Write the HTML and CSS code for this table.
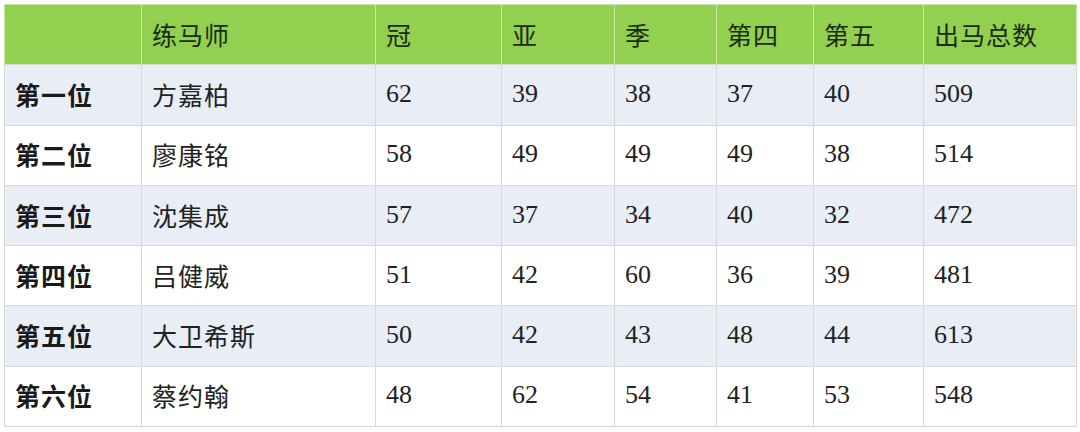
FILE: index.html
```html
<!DOCTYPE html>
<html>
<head>
<meta charset="utf-8">
<link rel="stylesheet" href="styles.css">
</head>
<body>
<table class="stats">
  <colgroup>
    <col class="c1"><col class="c2"><col class="c3"><col class="c4"><col class="c5"><col class="c6"><col class="c7"><col class="c8">
  </colgroup>
  <thead>
    <tr><th></th><th>练马师</th><th>冠</th><th>亚</th><th>季</th><th>第四</th><th>第五</th><th>出马总数</th></tr>
  </thead>
  <tbody>
    <tr class="alt"><td class="rank">第一位</td><td>方嘉柏</td><td>62</td><td>39</td><td>38</td><td>37</td><td>40</td><td>509</td></tr>
    <tr><td class="rank">第二位</td><td>廖康铭</td><td>58</td><td>49</td><td>49</td><td>49</td><td>38</td><td>514</td></tr>
    <tr class="alt"><td class="rank">第三位</td><td>沈集成</td><td>57</td><td>37</td><td>34</td><td>40</td><td>32</td><td>472</td></tr>
    <tr><td class="rank">第四位</td><td>吕健威</td><td>51</td><td>42</td><td>60</td><td>36</td><td>39</td><td>481</td></tr>
    <tr class="alt"><td class="rank">第五位</td><td>大卫希斯</td><td>50</td><td>42</td><td>43</td><td>48</td><td>44</td><td>613</td></tr>
    <tr><td class="rank">第六位</td><td>蔡约翰</td><td>48</td><td>62</td><td>54</td><td>41</td><td>53</td><td>548</td></tr>
  </tbody>
</table>
</body>
</html>
```

FILE: styles.css
```css
html, body {
  margin: 0;
  padding: 0;
  background: #ffffff;
}
body {
  padding: 4px 0 0 4px;
}
.stats {
  border-collapse: collapse;
  table-layout: fixed;
  width: 1072px;
  font-family: "Liberation Serif", "Times New Roman", "DejaVu Serif", "Noto Sans CJK SC", serif;
  font-size: 26px;
  color: #222222;
  border: 1px solid #d4d4d4;
}
.c1 { width: 137px; }
.c2 { width: 234px; }
.c3 { width: 126px; }
.c4 { width: 113px; }
.c5 { width: 102px; }
.c6 { width: 97px; }
.c7 { width: 110px; }
.c8 { width: 153px; }
.stats th,
.stats td {
  height: 57.3px;
  padding: 0 0 2px 10px;
  text-align: left;
  vertical-align: middle;
  border: 1px solid #d8d8d8;
  white-space: nowrap;
}
.stats th,
.stats td:nth-child(-n+2) {
  font-size: 25px;
  letter-spacing: 1px;
}
.stats th {
  background: #92d050;
  font-weight: normal;
  color: #1c2a10;
  border-color: #c8e6a8;
  border-bottom-color: #d8d8d8;
}
.stats tr.alt td {
  background: #e8edf6;
}
.stats td.rank {
  font-weight: 600;
  color: #1a1a1a;
}
```
